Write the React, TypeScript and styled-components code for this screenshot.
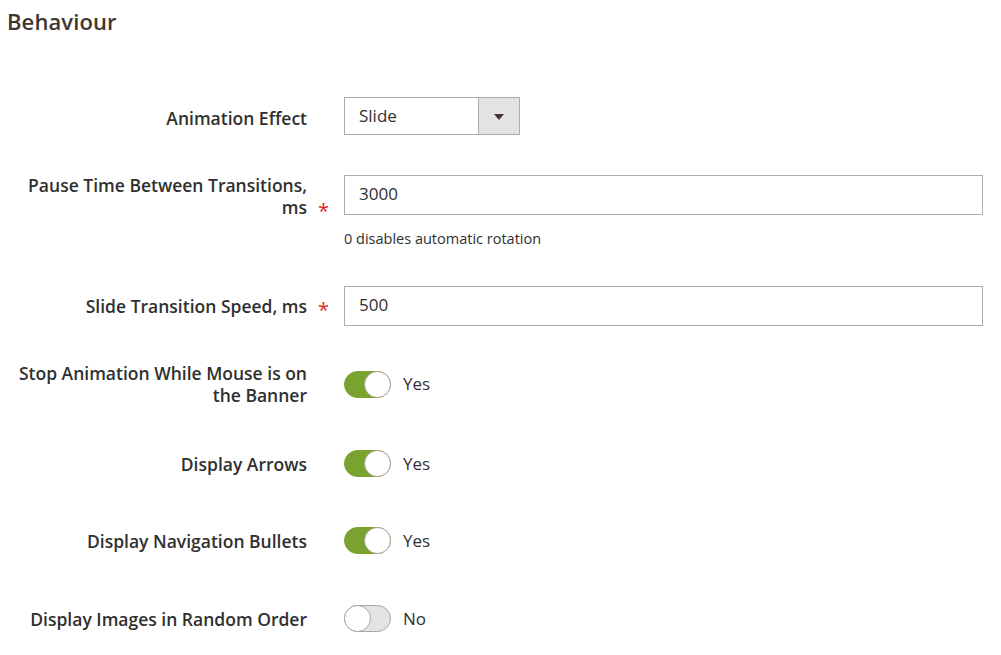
import React from "react";
import styled, { createGlobalStyle, css } from "styled-components";

const Global = createGlobalStyle`
  html, body { margin: 0; padding: 0; background: #ffffff; }
  body { font-family: "Open Sans", "Noto Sans", Arial, sans-serif; color: #303030; }
  * { box-sizing: border-box; }
`;

const Page = styled.div`
  width: 1001px;
  height: 655px;
  padding: 0 18px 0 7px;
  overflow: hidden;
`;

const Title = styled.h2`
  margin: 6px 0 0;
  font-size: 22px;
  line-height: 30px;
  font-weight: 600;
  color: #41362f;
  letter-spacing: 0.1px;
`;

const Field = styled.div<{ $top: number }>`
  display: grid;
  grid-template-columns: 337px 1fr;
  align-items: center;
  margin-top: ${(p) => p.$top}px;
`;

const LabelCell = styled.div`
  padding-right: 37px;
`;

const Label = styled.div<{ $offset?: number; $required?: boolean }>`
  position: relative;
  text-align: right;
  font-size: 17.5px;
  line-height: 22px;
  font-weight: 600;
  color: #303030;
  padding-top: ${(p) => p.$offset ?? 0}px;
  ${(p) =>
    p.$required &&
    css`
      &::after {
        content: "*";
        position: absolute;
        right: -22px;
        bottom: -4px;
        color: #e22626;
        font-size: 20px;
        line-height: 22px;
        font-weight: 400;
      }
    `}
`;

const Control = styled.div`
  display: flex;
  align-items: center;
  min-width: 0;
`;

const TextInput = styled.div`
  width: 100%;
  height: 40px;
  border: 1px solid #adadad;
  background: #fff;
  padding: 0 14px 3px;
  display: flex;
  align-items: center;
  font-size: 17px;
  color: #303030;
`;

const SelectBox = styled.div`
  width: 176px;
  height: 38px;
  border: 1px solid #adadad;
  background: #fff;
  display: flex;
  align-items: stretch;
`;

const SelectValue = styled.div`
  flex: 1;
  padding: 0 0 2px 14px;
  display: flex;
  align-items: center;
  font-size: 17px;
  color: #303030;
`;

const SelectArrow = styled.div`
  width: 41px;
  background: #e3e3e3;
  border-left: 1px solid #adadad;
  display: flex;
  align-items: center;
  justify-content: center;
  &::after {
    content: "";
    width: 0;
    height: 0;
    border-left: 5px solid transparent;
    border-right: 5px solid transparent;
    border-top: 6px solid #41362f;
    margin-top: 2px;
  }
`;

const NoteRow = styled.div`
  padding-left: 337px;
  margin-top: 11px;
  font-size: 14.5px;
  line-height: 20px;
  color: #303030;
`;

const Switch = styled.div<{ $on: boolean }>`
  position: relative;
  width: 47px;
  height: 27px;
  border-radius: 14px;
  background: ${(p) => (p.$on ? "#79a22e" : "#e3e3e3")};
  border: 1px solid ${(p) => (p.$on ? "#79a22e" : "#aaa6a0")};
  flex-shrink: 0;
  &::after {
    content: "";
    position: absolute;
    top: -1px;
    ${(p) => (p.$on ? "right: -1px;" : "left: -1px;")}
    width: 27px;
    height: 27px;
    border-radius: 50%;
    background: #fff;
    border: 1px solid #aaa6a0;
    box-sizing: border-box;
  }
`;

const SwitchText = styled.span`
  margin-left: 12px;
  font-size: 17px;
  line-height: 22px;
  color: #303030;
`;

type ToggleProps = { label: React.ReactNode; on: boolean; top: number };

const ToggleField = ({ label, on, top }: ToggleProps) => (
  <Field $top={top}>
    <LabelCell>
      <Label>{label}</Label>
    </LabelCell>
    <Control>
      <Switch $on={on} />
      <SwitchText>{on ? "Yes" : "No"}</SwitchText>
    </Control>
  </Field>
);

export default function App() {
  return (
    <Page>
      <Global />
      <Title>Behaviour</Title>

      <Field $top={61}>
        <LabelCell>
          <Label $offset={4}>Animation Effect</Label>
        </LabelCell>
        <Control>
          <SelectBox>
            <SelectValue>Slide</SelectValue>
            <SelectArrow />
          </SelectBox>
        </Control>
      </Field>

      <Field $top={37}>
        <LabelCell>
          <Label $offset={2} $required>
            Pause Time Between Transitions,
            <br />
            ms
          </Label>
        </LabelCell>
        <Control>
          <TextInput>3000</TextInput>
        </Control>
      </Field>
      <NoteRow>0 disables automatic rotation</NoteRow>

      <Field $top={37}>
        <LabelCell>
          <Label $required>Slide Transition Speed, ms</Label>
        </LabelCell>
        <Control>
          <TextInput>500</TextInput>
        </Control>
      </Field>

      <ToggleField
        top={36}
        on={true}
        label={
          <>
            Stop Animation While Mouse is on
            <br />
            the Banner
          </>
        }
      />
      <ToggleField top={44} on={true} label="Display Arrows" />
      <ToggleField top={50} on={true} label="Display Navigation Bullets" />
      <ToggleField top={51} on={false} label="Display Images in Random Order" />
    </Page>
  );
}
